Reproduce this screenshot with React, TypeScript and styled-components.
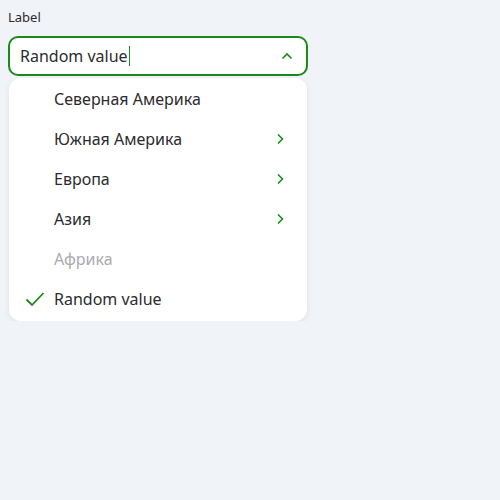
import React from 'react';
import styled, { createGlobalStyle } from 'styled-components';

const Global = createGlobalStyle`
  body {
    margin: 0;
    background: #f0f3f7;
    font-family: 'Noto Sans', 'Open Sans', sans-serif;
    color: #1f1f22;
  }
`;

const Field = styled.div`
  width: 300px;
  padding: 8px 0 0 8px;
  display: flex;
  flex-direction: column;
`;

const Label = styled.label`
  font-size: 13px;
  line-height: 18px;
  color: #2b2b2e;
  margin-bottom: 10px;
`;

const Control = styled.div`
  box-sizing: border-box;
  height: 40px;
  border: 2px solid #1b8a1b;
  border-radius: 10px;
  background: #fff;
  display: flex;
  align-items: center;
  padding: 0 13px 0 10px;
`;

const Value = styled.span`
  flex: 1;
  font-size: 16px;
  color: #2b2b2e;
  display: flex;
  align-items: center;
`;

const Caret = styled.span`
  display: inline-block;
  width: 1px;
  height: 20px;
  background: #1b8a1b;
  margin-left: 1px;
`;

const Menu = styled.ul`
  list-style: none;
  margin: 2px 1px 0;
  padding: 1px 0 2px;
  background: #fff;
  border-radius: 12px;
  box-shadow: 0 2px 6px rgba(30, 40, 60, 0.08);
`;

const Item = styled.li<{ $disabled?: boolean }>`
  height: 40px;
  display: grid;
  grid-template-columns: 45px 1fr 54px;
  align-items: center;
  font-size: 16px;
  color: ${p => (p.$disabled ? '#a9abaf' : '#2b2b2e')};
`;

const IconCell = styled.span<{ $pad?: number }>`
  display: flex;
  align-items: center;
  justify-content: center;
  padding-left: ${p => p.$pad ?? 0}px;
`;

const Chevron = ({ dir }: { dir: 'up' | 'right' }) =>
  dir === 'up' ? (
    <svg width="12" height="8" viewBox="0 0 12 8">
      <path d="M1.5 6.5 L6 2 L10.5 6.5" fill="none" stroke="#1b8a1b" strokeWidth="1.6" />
    </svg>
  ) : (
    <svg width="8" height="12" viewBox="0 0 8 12">
      <path d="M2 1.5 L6.5 6 L2 10.5" fill="none" stroke="#1b8a1b" strokeWidth="1.6" />
    </svg>
  );

const Check = () => (
  <svg width="20" height="16" viewBox="0 0 20 16">
    <path d="M1.5 8.5 L7 14 L18.5 2" fill="none" stroke="#1b8a1b" strokeWidth="1.8" />
  </svg>
);

const items = [
  { text: 'Северная Америка' },
  { text: 'Южная Америка', sub: true },
  { text: 'Европа', sub: true },
  { text: 'Азия', sub: true },
  { text: 'Африка', disabled: true },
  { text: 'Random value', selected: true },
];

export default function App() {
  return (
    <>
      <Global />
      <Field>
        <Label>Label</Label>
        <Control>
          <Value>
            Random value
            <Caret />
          </Value>
          <Chevron dir="up" />
        </Control>
        <Menu>
          {items.map(it => (
            <Item key={it.text} $disabled={it.disabled}>
              <IconCell $pad={7}>{it.selected && <Check />}</IconCell>
              <span>{it.text}</span>
              <IconCell>{it.sub && <Chevron dir="right" />}</IconCell>
            </Item>
          ))}
        </Menu>
      </Field>
    </>
  );
}
